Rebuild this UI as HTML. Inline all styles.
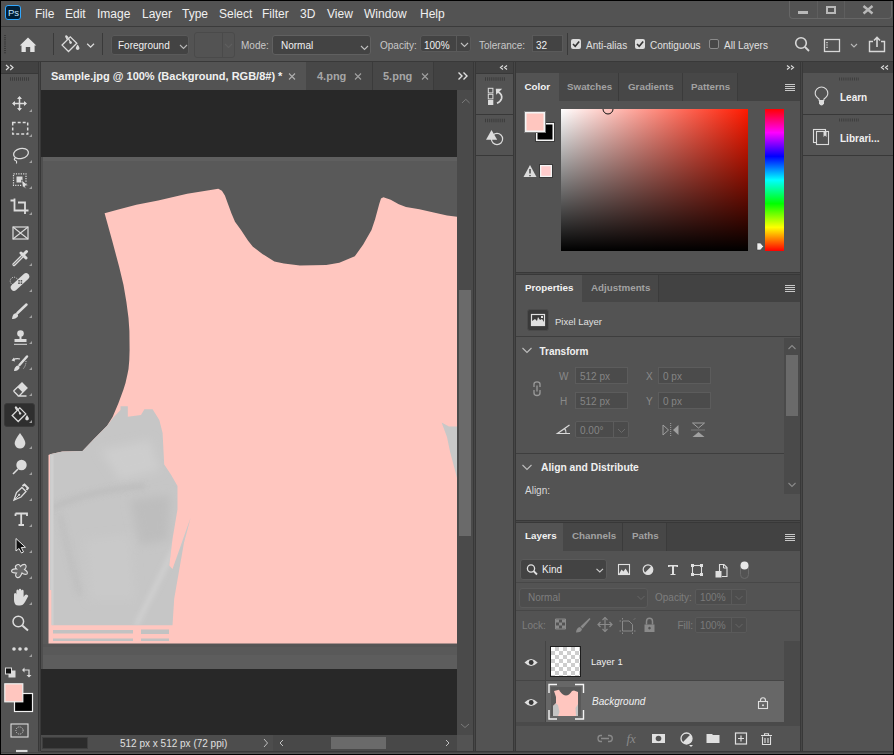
<!DOCTYPE html>
<html><head><meta charset="utf-8">
<style>
*{margin:0;padding:0;box-sizing:border-box}
html,body{width:894px;height:755px;overflow:hidden;background:#000}
body{position:relative;font-family:"Liberation Sans",sans-serif;color:#e8e8e8}
.a{position:absolute}
.t{position:absolute;white-space:nowrap;line-height:1}
.bg5{background:#535353}
.menu{font-size:12px;color:#f0f0f0;top:8px}
.tab{font-size:9.8px;font-weight:bold;color:#a2a2a2}
.tab.on{color:#f2f2f2}
svg{position:absolute;overflow:visible}
</style></head><body>
<!-- menu bar -->
<div class="a bg5" style="left:1px;top:1px;width:892px;height:25px"></div>
<div class="a" style="left:1px;top:26px;width:892px;height:1px;background:#3b3b3b"></div>
<!-- ps logo -->
<div class="a" style="left:5px;top:5px;width:16px;height:15px;border:1.5px solid #31a8ff;border-radius:3px;background:#001e36"></div>
<div class="t" style="left:8px;top:7.5px;font-size:9.5px;color:#c0e6ff;letter-spacing:0px;font-weight:normal">Ps</div>
<div class="t menu" style="left:35px">File</div>
<div class="t menu" style="left:65px">Edit</div>
<div class="t menu" style="left:97px">Image</div>
<div class="t menu" style="left:142px">Layer</div>
<div class="t menu" style="left:182px">Type</div>
<div class="t menu" style="left:219px">Select</div>
<div class="t menu" style="left:262px">Filter</div>
<div class="t menu" style="left:300px">3D</div>
<div class="t menu" style="left:327px">View</div>
<div class="t menu" style="left:364px">Window</div>
<div class="t menu" style="left:420px">Help</div>
<!-- window controls -->
<div class="a" style="left:789px;top:1px;width:103px;height:18px;border:1px solid #666;border-top:none;border-radius:0 0 4px 4px"></div>
<div class="a" style="left:817px;top:1px;width:1px;height:17px;background:#5e5e5e"></div>
<div class="a" style="left:844px;top:1px;width:1px;height:17px;background:#5e5e5e"></div>
<div class="a" style="left:798px;top:11px;width:10px;height:3px;background:#b8b8b8"></div>
<div class="a" style="left:826px;top:6px;width:10px;height:8px;border:2px solid #b8b8b8"></div>
<svg width="12" height="10" style="left:862px;top:4.5px"><path d="M1.5,1 L10.5,8.5 M10.5,1 L1.5,8.5" stroke="#b8b8b8" stroke-width="2.4"/></svg>
<!-- options bar -->
<div class="a bg5" style="left:1px;top:27px;width:892px;height:34px"></div>
<div class="a" style="left:1px;top:61px;width:892px;height:1px;background:#393939"></div>
<svg width="4" height="22" viewBox="4 34 4 22" style="left:4px;top:34px"><path d="M5,35 L5,54" stroke="#3a3a3a" stroke-width="2" stroke-dasharray="1 1.15"/></svg>
<svg width="20" height="20" style="left:18px;top:35px" viewBox="18 35 20 20"><path d="M28,37.5 L36.3,45.5 L34.6,45.5 L34.6,52 L30.2,52 L30.2,47 L25.8,47 L25.8,52 L21.5,52 L21.5,45.5 L19.8,45.5 Z" fill="#e2e2e2"/></svg>
<div class="a" style="left:53px;top:33px;width:1px;height:22px;background:#3a3a3a"></div>
<svg width="40" height="24" style="left:58px;top:32px" viewBox="58 32 40 24"><g fill="none" stroke="#dcdcdc" stroke-width="1.3"><path d="M62.1,45.1 L68.5,51.5 L76.8,43.2 L70.3,36.8 Z"/><path d="M70.5,42.3 L67.5,37 Q66,34.8 65.8,36.6 L67.3,39.5"/><path d="M87.2,43.8 L90.6,47.2 L94,43.8"/></g><circle cx="70.6" cy="42.6" r="1.3" fill="#dcdcdc"/><path d="M77.6,44.5 Q80,47.5 79.3,49 Q77.6,50.8 76,49 Q75.3,47.5 77.6,44.5 Z" fill="#dcdcdc"/></svg>
<div class="a" style="left:102px;top:33px;width:1px;height:22px;background:#3a3a3a"></div>
<div class="a" style="left:111px;top:35px;width:78px;height:20px;background:#434343;border:1px solid #5a5a5a;border-radius:3px"></div>
<div class="t" style="left:118px;top:41px;font-size:10px;color:#f0f0f0">Foreground</div>
<svg width="10" height="6" style="left:178.5px;top:44px"><path d="M1,1 L4.5,4.5 L8,1" fill="none" stroke="#b8b8b8" stroke-width="1.1"/></svg>
<div class="a" style="left:194px;top:32px;width:41px;height:26px;border:1px solid #4a4a4a;border-radius:3px"></div>
<div class="a" style="left:222px;top:33px;width:1px;height:24px;background:#4a4a4a"></div>
<svg width="10" height="6" style="left:224px;top:43px"><path d="M1,1 L4.5,4.5 L8,1" fill="none" stroke="#5e5e5e" stroke-width="1.2"/></svg>
<div class="t" style="left:241px;top:41px;font-size:10px;color:#c8c8c8">Mode:</div>
<div class="a" style="left:272px;top:35px;width:99px;height:20px;background:#434343;border:1px solid #606060;border-radius:3px"></div>
<div class="t" style="left:281px;top:41px;font-size:10px;color:#f0f0f0">Normal</div>
<svg width="10" height="6" style="left:360px;top:45px"><path d="M1,1 L4.5,4.5 L8,1" fill="none" stroke="#c0c0c0" stroke-width="1.1"/></svg>
<div class="t" style="left:380px;top:41px;font-size:10px;color:#c8c8c8">Opacity:</div>
<div class="a" style="left:420px;top:35px;width:51px;height:17px;background:#434343;border:1px solid #5a5a5a;border-radius:3px"></div>
<div class="a" style="left:456px;top:36px;width:1px;height:15px;background:#5a5a5a"></div>
<div class="t" style="left:424px;top:41px;font-size:10px;color:#f0f0f0">100%</div>
<svg width="10" height="6" style="left:459.5px;top:42px"><path d="M1,1 L4.5,4.5 L8,1" fill="none" stroke="#c0c0c0" stroke-width="1.1"/></svg>
<div class="t" style="left:479px;top:41px;font-size:10px;color:#c8c8c8">Tolerance:</div>
<div class="a" style="left:532px;top:35px;width:31px;height:17px;background:#434343;border:1px solid #5a5a5a"></div>
<div class="t" style="left:536px;top:41px;font-size:10px;color:#f0f0f0">32</div>
<div class="a" style="left:567px;top:33px;width:1px;height:22px;background:#3a3a3a"></div>
<div class="a" style="left:571px;top:39px;width:10px;height:10px;background:#dcdcdc;border-radius:2px"></div>
<svg width="10" height="10" style="left:571px;top:39px"><path d="M2,5 L4.2,7.3 L8.2,2.5" fill="none" stroke="#333" stroke-width="1.6"/></svg>
<div class="t" style="left:586px;top:41px;font-size:10px;color:#e0e0e0">Anti-alias</div>
<div class="a" style="left:635px;top:39px;width:10px;height:10px;background:#dcdcdc;border-radius:2px"></div>
<svg width="10" height="10" style="left:635px;top:39px"><path d="M2,5 L4.2,7.3 L8.2,2.5" fill="none" stroke="#333" stroke-width="1.6"/></svg>
<div class="t" style="left:650px;top:41px;font-size:10px;color:#e0e0e0">Contiguous</div>
<div class="a" style="left:709px;top:39px;width:10px;height:10px;border:1px solid #8a8a8a;border-radius:2px;background:#474747"></div>
<div class="t" style="left:724px;top:41px;font-size:10px;color:#e0e0e0">All Layers</div>
<svg width="20" height="20" style="left:792px;top:35px" viewBox="792 35 20 20"><circle cx="801" cy="43" r="5.3" fill="none" stroke="#d8d8d8" stroke-width="1.6"/><path d="M805,47 L809,51" stroke="#d8d8d8" stroke-width="1.8"/></svg>
<svg width="20" height="20" style="left:822px;top:35px" viewBox="822 35 20 20"><rect x="824.5" y="39.5" width="15" height="12" fill="none" stroke="#d8d8d8" stroke-width="1.3"/><path d="M827,42 L827,49" stroke="#d8d8d8" stroke-width="1.4" stroke-dasharray="1.2 1.2"/></svg>
<svg width="10" height="6" style="left:850px;top:43px"><path d="M1,1 L4,4 L7,1" fill="none" stroke="#b8b8b8" stroke-width="1.1"/></svg>
<svg width="20" height="20" style="left:867px;top:34px" viewBox="867 34 20 20"><path d="M873,41.5 L869.5,41.5 L869.5,51.5 L884.5,51.5 L884.5,41.5 L881,41.5" fill="none" stroke="#d8d8d8" stroke-width="1.4"/><path d="M877,47 L877,37.5 M874,40.5 L877,37.3 L880,40.5" fill="none" stroke="#d8d8d8" stroke-width="1.6"/></svg>
<!-- workspace bg -->
<div class="a" style="left:1px;top:62px;width:892px;height:691px;background:#464646"></div><div class="a" style="left:1px;top:753px;width:892px;height:1px;background:#575757"></div>
<svg width="894" height="755" viewBox="0 0 894 755" style="left:0;top:0"><g stroke="#383838" stroke-width="1" fill="none">
<path d="M38.5,62 V751 M40.5,62 V751 M473.5,62 V751 M475.5,62 V751 M513.5,62 V751 M515.5,62 V751 M800.5,62 V751 M802.5,62 V751"/>
<path d="M1,73.5 H38 M476,73.5 H513 M803,73.5 H893 M516,73.5 H800"/>
<path d="M516,272.5 H800 M516,274.5 H800 M516,520.5 H800 M516,522.5 H800 M476,114.5 H513 M476,155.5 H513 M803,114.5 H893 M803,155.5 H893"/>
<path d="M41,751.5 H893"/>
</g></svg>

<!-- toolbar column -->
<div class="a" style="left:1px;top:62px;width:37px;height:11px;background:#424242"></div>
<div class="a bg5" style="left:1px;top:74px;width:37px;height:678px"></div>
<div class="a" style="left:4px;top:403px;width:31px;height:24px;background:#2f2f2f;border:1px solid #3a3a3a;border-radius:3px"></div>
<svg width="40" height="693" viewBox="0 62 40 693" style="left:0;top:62px">
<g fill="#dcdcdc" stroke="none">
<!-- >> -->
<path d="M6,65 L8.8,67.5 L6,70 M10.2,65 L13,67.5 L10.2,70" fill="none" stroke="#dcdcdc" stroke-width="1.2"/>
<!-- gripper -->
<path d="M10,79 L30,79" stroke="#3c3c3c" stroke-width="3.6" stroke-dasharray="1 1"/>
<!-- triangles -->
<path d="M32,109 L32,112 L29,112 Z M32,134 L32,137 L29,137 Z M32,160 L32,163 L29,163 Z M32,186 L32,189 L29,189 Z M32,212 L32,215 L29,215 Z M32,263 L32,266 L29,266 Z M32,289 L32,292 L29,292 Z M32,315 L32,318 L29,318 Z M32,341 L32,344 L29,344 Z M32,367 L32,370 L29,370 Z M32,393 L32,396 L29,396 Z M32,420 L32,423 L29,423 Z M32,446 L32,449 L29,449 Z M32,472 L32,475 L29,475 Z M32,498 L32,501 L29,501 Z M32,524 L32,527 L29,527 Z M32,550 L32,553 L29,553 Z M32,576 L32,579 L29,579 Z M32,602 L32,605 L29,605 Z M32,654 L32,657 L29,657 Z" fill="#a0a0a0"/>
</g>
<g fill="none" stroke="#dcdcdc" stroke-width="1.5">
<!-- move -->
<path d="M19.5,97 L19.5,110 M13,103.5 L26,103.5"/>
<path d="M19.5,96 L17,99 L22,99 Z M19.5,111 L17,108 L22,108 Z M12,103.5 L15,101 L15,106 Z M27,103.5 L24,101 L24,106 Z" fill="#dcdcdc" stroke="none"/>
<!-- marquee -->
<rect x="12.7" y="122.5" width="15" height="11.5" stroke-dasharray="3 2"/>
<!-- lasso -->
<ellipse cx="21" cy="153.5" rx="7.5" ry="5" transform="rotate(-12 21 153.5)" stroke-width="1.3"/>
<path d="M15.5,157.5 Q13,160 15.8,160.5 Q17,161 16.5,163.5" stroke-width="1.2"/>
<!-- object selection -->
<rect x="13.5" y="173.8" width="12.5" height="11.5" stroke-dasharray="1.2 1.2" stroke-width="1.2"/>
<rect x="16.5" y="176.5" width="6" height="6" fill="#dcdcdc" stroke="none"/>
<path d="M21.5,180 L28.5,185.5 L25,186 L26.5,189 L22.5,186.5 Z" fill="#dcdcdc" stroke="#535353" stroke-width="0.8"/>
<!-- crop -->
<path d="M10.5,200.5 L14.5,200.5 M14.5,198.5 L14.5,210.5 L25,210.5 M18,202.5 L25,202.5 L25,214 M25,210.5 L28.5,210.5" stroke-width="1.8"/>
<!-- frame -->
<rect x="13" y="227" width="15" height="12" stroke-width="1.2"/>
<path d="M13,227 L28,239 M28,227 L13,239" stroke-width="1.1"/>
<!-- eyedropper -->
<path d="M14,264.5 L23,255.5" stroke-width="3.2" stroke-linecap="round"/>
<path d="M14,264.5 L23,255.5" stroke="#535353" stroke-width="1" stroke-linecap="round"/>
<path d="M21,253 L26,258 M23.5,254.5 L26.5,251.5" stroke-width="3" stroke-linecap="round"/>
<!-- healing -->
<path d="M14,287.5 L26,276.5" stroke-width="6.5" stroke-linecap="round"/>
<rect x="18.2" y="280" width="1.6" height="1.6" fill="#535353" stroke="none"/><rect x="20.6" y="280" width="1.6" height="1.6" fill="#535353" stroke="none"/><rect x="18.2" y="282.4" width="1.6" height="1.6" fill="#535353" stroke="none"/><rect x="20.6" y="282.4" width="1.6" height="1.6" fill="#535353" stroke="none"/>
<circle cx="14" cy="281" r="3.8" stroke-width="1" stroke-dasharray="1 1.2"/>
<!-- brush -->
<path d="M17.5,313 L26.5,304.5" stroke-width="2.5" stroke-linecap="round"/>
<path d="M12,319 Q12.5,313 16.5,313 Q19,315 17.5,317 Q15,319.5 12,319 Z" fill="#dcdcdc" stroke="none"/>
<!-- stamp -->
<circle cx="20.5" cy="333.5" r="3.3" fill="#dcdcdc" stroke="none"/>
<path d="M19.5,336 L21.5,336 L21.5,339 L26.5,339 L26.5,342 L14.5,342 L14.5,339 L19.5,339 Z" fill="#dcdcdc" stroke="none"/>
<path d="M14,344.3 L27,344.3" stroke-width="1"/>
<!-- history brush -->
<path d="M19.5,365 L27,356.5" stroke-width="2.5" stroke-linecap="round"/>
<path d="M14,371 Q14.5,366 18,365.5 Q20.5,367 19,369 Q17,371.5 14,371 Z" fill="#dcdcdc" stroke="none"/>
<path d="M20,359 Q16,358 13,360" stroke-width="1.2"/>
<path d="M11.5,360.5 L14,357.5 L15,361.5 Z" fill="#dcdcdc" stroke="none"/>
<path d="M26,361 Q26,366 23,369" stroke-width="1" stroke-dasharray="1 1.3"/>
<!-- eraser -->
<path d="M13.5,391 L22,383 L27,388 L19,396 L26.5,396 M13.5,391 L18.5,396 L19,396" stroke-width="1.3"/>
<path d="M22,383 L27,388 L22.5,392.3 L17.5,387.3 Z" fill="#dcdcdc" stroke="none"/>
<!-- bucket -->
<path d="M12.2,415.5 L18.2,421.5 L25.8,413.9 L19.8,407.9 Z" stroke-width="1.3"/>
<path d="M20,413.2 L17,408 Q15.6,406 15.4,407.6 L16.8,410.3" stroke-width="1.2"/>
<circle cx="20.1" cy="413.4" r="1.2" fill="#dcdcdc" stroke="none"/>
<path d="M27,415 Q29.3,418 28.7,419.5 Q27,421.2 25.4,419.5 Q24.7,418 27,415 Z" fill="#dcdcdc" stroke="none"/>
<!-- blur -->
<path d="M20,433 Q26,441 25.3,444 Q24,448.5 20,448.5 Q16,448.5 14.7,444 Q14,441 20,433 Z" fill="#dcdcdc" stroke="none"/>
<!-- dodge -->
<circle cx="21.5" cy="465" r="5.2" fill="#dcdcdc" stroke="none"/>
<path d="M18,469 L13,474" stroke-width="1.6"/>
<!-- pen -->
<path d="M14,500 L16.5,492.5 L22,487.5 L26,491.5 L21,497 Z" stroke-width="1.3"/>
<path d="M22.5,486 L24.5,484.5 L28,488 L26.5,490" stroke-width="2"/>
<path d="M14,500 L19,495" stroke-width="0.9"/>
<circle cx="19.2" cy="494.8" r="1" fill="#dcdcdc" stroke="none"/>
<!-- type -->
<path d="M15.5,513.5 L15.5,516 M15.5,513.5 L27,513.5 L27,516 M21.2,513.5 L21.2,525 M18.5,525 L24,525" stroke-width="1.8"/>
<!-- path select -->
<path d="M16,538.5 L16,551 L19,548.5 L21.5,553 L23.5,552 L21.3,547.5 L25.5,547.3 Z" fill="#111" stroke="#e6e6e6" stroke-width="1"/>
<!-- custom shape -->
<path d="M16,565.5 Q19,563 20.5,566.5 Q22.5,564 25,564.5 Q27.5,566.5 24.5,569.5 Q28.5,572 27,574 Q24.5,575 22,573 Q20,578.5 17,577.5 Q14.5,576 16.5,573 Q11.5,573 11.5,571 Q12,568.5 16.5,569 Q14.5,567 16,565.5 Z" fill="#686868" stroke="#dcdcdc" stroke-width="1.1"/>
<!-- hand -->
<path d="M14,597 L14,594.5 Q14,593 15.2,593 Q16.4,593 16.4,594.5 L16.4,591 Q16.4,589.5 17.6,589.5 Q18.8,589.5 18.8,591 L18.8,590 Q18.8,588.8 20,588.8 Q21.2,588.8 21.2,590 L21.2,591 Q21.2,589.8 22.4,589.8 Q23.6,589.8 23.6,591 L23.6,597 L25,595 Q26.3,593.8 27.5,595 L28.3,596 L25,602 Q23,605.5 20,605.5 L18.5,605.5 Q14,605.5 14,600 Z" fill="#dcdcdc" stroke="none"/>
<!-- zoom -->
<circle cx="18.3" cy="621.5" r="5.3" stroke-width="1.5"/>
<path d="M22.3,625.5 L28,630.5" stroke-width="2"/>
<!-- dots -->
<circle cx="14" cy="649" r="1.8" fill="#dcdcdc" stroke="none"/><circle cx="20" cy="649" r="1.8" fill="#dcdcdc" stroke="none"/><circle cx="26" cy="649" r="1.8" fill="#dcdcdc" stroke="none"/>
<!-- default colors -->
<rect x="9" y="671" width="6" height="6" fill="#dcdcdc" stroke="#dcdcdc" stroke-width="1"/>
<rect x="5.5" y="668" width="6" height="6" fill="#111" stroke="#dcdcdc" stroke-width="1"/>
<!-- swap -->
<path d="M23,670 L29,670 L29,676" stroke-width="1.2"/>
<path d="M22,670 L24.5,667.5 L24.5,672.5 Z M29,677.5 L26.5,675 L31.5,675 Z" fill="#dcdcdc" stroke="none"/>
<!-- quick mask -->
<rect x="11" y="724" width="17" height="13" stroke-width="1.1"/>
<circle cx="19.5" cy="730.5" r="3.6" stroke-width="1" stroke-dasharray="0.9 1.2"/>
<path d="M16,751 L27.5,751" stroke-width="2.2"/>
</g>
<rect x="14.5" y="693.5" width="18" height="18" fill="#000" stroke="#f0f0f0" stroke-width="1.2"/>
<rect x="4.8" y="683.8" width="18" height="18" fill="#ffc6bf" stroke="#f0f0f0" stroke-width="1.2"/>
</svg>

<!-- document column -->
<div class="a" style="left:41px;top:62px;width:432px;height:28px;background:#424242"></div>
<div class="a" style="left:41px;top:90px;width:416px;height:645px;background:#282828"></div>
<div class="a" style="left:457px;top:90px;width:16px;height:645px;background:#4a4a4a"></div>
<svg width="416" height="512" viewBox="41 157 416 512" style="left:41px;top:157px">
<defs>
<clipPath id="cg"><path d="M50,454.3 L62.4,451.5 L82.5,451 L93.7,439.2 L107.1,425.8 L113.3,417.4 L120.5,410 L120.5,406.2 L127.8,406.2 L127.8,416.8 L141,414.9 L144.4,409.3 L152.6,409.3 L159.3,419.9 L162.6,433 L164.2,464.6 L170.9,474.5 L177.5,486 L177.5,509.3 L172.5,539 L169.2,565.6 L172.5,569 L190.7,517.6 L184,542.4 L174.2,598.7 L172.5,625.2 L51.6,625.2 L51.6,590 L50,590 Z"/></clipPath>
<filter id="bl" x="-50%" y="-50%" width="200%" height="200%"><feGaussianBlur stdDeviation="5"/></filter>
<filter id="bl2" x="-50%" y="-50%" width="200%" height="200%"><feGaussianBlur stdDeviation="2.5"/></filter>
</defs>
<rect x="41" y="157" width="416" height="512" fill="#595959"/>
<rect x="41" y="157" width="416" height="4" fill="#5f5f5f"/>
<rect x="41" y="655" width="416" height="14" fill="#5d5d5d"/>
<rect x="41" y="644" width="416" height="3" fill="#555"/>
<path fill="#ffc6bf" d="M104.6,213.2 L117.4,209.8 L136.4,204.7 L158.2,200.4 L187.2,193.8 L209,190.2 L218.3,188.7 L221.9,190.7 L224.9,195.5 L227.9,203.8 L231.5,213.4 L235,221.7 L241,230 L248.1,240.8 L252.9,246.7 L262.4,253.9 L274.4,261.6 L283.9,263.4 L300,265.4 L326.2,264.9 L339.3,262.8 L354.8,256.3 L363.2,244.4 L371.5,230.1 L375.1,219.3 L379.3,203.8 L381,198.5 L383.4,197.3 L390.7,199.8 L398.8,204.3 L406,207 L419.4,209.2 L433.7,212.4 L447.1,215.5 L457,216.8 L457,643.5 L48.5,643.5 L48.5,455 L50,454.3 L62.4,451.5 L82.5,451 L93.7,439.2 L107.1,425.8 L112.7,416.8 L118.3,403.4 L123.3,390 L125.5,383 L127.5,374 L128.5,369 L129.3,360 L129.6,350 L129.4,331 L128.5,318 L126.4,302 L123.5,285 L119.2,267 L112,240 Z"/>
<g clip-path="url(#cg)">
<rect x="45" y="400" width="150" height="230" fill="#c6c6c6"/>
<path d="M100,450 L150,440 L160,470 L120,480 Z" fill="#cdcdcd" filter="url(#bl)"/>
<path d="M52,508 Q90,490 145,486" stroke="#bbbbbb" stroke-width="6" fill="none" filter="url(#bl2)" opacity=".7"/>
<path d="M60,515 Q70,560 80,595" stroke="#bdbdbd" stroke-width="6" fill="none" filter="url(#bl2)" opacity=".6"/>
<path d="M130,500 L170,495 L168,540 L140,545 Z" fill="#bdbdbd" filter="url(#bl)"/>
<path d="M85,540 L130,535 L135,600 L90,600 Z" fill="#c9c9c9" filter="url(#bl)"/>
<path d="M136,626 L186,525" stroke="#d2d2d2" stroke-width="4" fill="none" filter="url(#bl2)"/>
<path d="M52,455 L52,625" stroke="#cfcfcf" stroke-width="3" fill="none"/>
</g>
<path fill="#c2c2c2" d="M53,630 L133,630 L133,633.5 L53,633.5 Z M141,629.5 L169,629.5 L169,634 L141,634 Z M53,638.5 L133,638.5 L133,641 L53,641 Z M141,638.5 L169,638.5 L169,641 L141,641 Z"/>
<path fill="#c8c8c8" d="M441.6,422.5 L449,426.5 L457,426.5 L457,478 L450,451.6 L447,437 Z"/>
<rect x="41" y="157" width="2" height="512" fill="#4e4e4e"/>
</svg>
<div class="a" style="left:41px;top:735px;width:432px;height:16px;background:#4d4d4d"></div>
<div class="a bg5" style="left:41px;top:62px;width:265px;height:28px"></div>
<div class="a" style="left:306px;top:62px;width:67px;height:28px;background:#474747;border-right:1px solid #3b3b3b"></div>
<div class="a" style="left:373px;top:62px;width:61px;height:28px;background:#474747;border-right:1px solid #3b3b3b"></div>
<div class="t" style="left:51px;top:70.8px;font-size:11px;font-weight:bold;color:#f0f0f0">Sample.jpg @ 100% (Background, RGB/8#) *</div>
<div class="t" style="left:317px;top:70.8px;font-size:11px;font-weight:bold;color:#a6a6a6">4.png</div>
<div class="t" style="left:383px;top:70.8px;font-size:11px;font-weight:bold;color:#a6a6a6">5.png</div>
<svg width="480" height="30" viewBox="0 62 480 30" style="left:0;top:62px"><g fill="none" stroke-width="1.1">
<path d="M289,73.5 L295,79.5 M295,73.5 L289,79.5" stroke="#b0b0b0"/>
<path d="M355,73.5 L361,79.5 M361,73.5 L355,79.5" stroke="#a0a0a0"/>
<path d="M422,73.5 L428,79.5 M428,73.5 L422,79.5" stroke="#a0a0a0"/>
<path d="M458.5,72.5 L462,76 L458.5,79.5 M463.5,72.5 L467,76 L463.5,79.5" stroke="#e0e0e0" stroke-width="1.4"/>
</g></svg>
<!-- scrollbars -->
<div class="a" style="left:459px;top:290px;width:12px;height:246px;background:#6a6a6a"></div>
<svg width="20" height="650" viewBox="455 90 20 650" style="left:455px;top:90px"><path d="M462,103 L465.8,99.3 L469.6,103 M461,724 L465,727.5 L469,724" fill="none" stroke="#7a7a7a" stroke-width="1"/></svg>
<div class="a" style="left:42px;top:737px;width:46px;height:12px;background:#2b2b2b;border:1px solid #3e3e3e"></div>
<div class="t" style="left:120px;top:739px;font-size:10px;color:#e0e0e0">512 px x 512 px (72 ppi)</div>
<div class="a" style="left:273px;top:735px;width:184px;height:16px;background:#484848"></div>
<div class="a" style="left:331px;top:737px;width:55px;height:12px;background:#6a6a6a"></div>
<div class="a" style="left:457px;top:735px;width:16px;height:16px;background:#535353"></div>
<svg width="480" height="20" viewBox="0 735 480 20" style="left:0;top:735px"><path d="M264,739 L267.5,743 L264,747 M283,740 L280,743 L283,746 M446,740 L449,743 L446,746" fill="none" stroke="#c0c0c0" stroke-width="1"/></svg>

<!-- icons column -->
<div class="a" style="left:476px;top:62px;width:37px;height:11px;background:#424242"></div>
<div class="a bg5" style="left:476px;top:74px;width:37px;height:40px"></div>
<div class="a bg5" style="left:476px;top:115px;width:37px;height:40px"></div>
<div class="a bg5" style="left:476px;top:156px;width:37px;height:595px"></div>
<svg width="40" height="100" viewBox="474 60 40 100" style="left:474px;top:60px">
<path d="M503,65.5 L500.5,67.5 L503,69.5 M507,65.5 L504.5,67.5 L507,69.5" fill="none" stroke="#dcdcdc" stroke-width="1.2"/>
<path d="M485,79 L505,79 M485,120.5 L505,120.5" stroke="#3c3c3c" stroke-width="3.5" stroke-dasharray="1 1.1"/>
<rect x="488.3" y="88.3" width="4.6" height="4.6" fill="none" stroke="#dcdcdc" stroke-width="1"/>
<rect x="488.3" y="94.3" width="4.6" height="4.6" fill="none" stroke="#dcdcdc" stroke-width="1"/>
<rect x="488" y="100" width="5.3" height="5" fill="#dcdcdc"/>
<path d="M498.3,92 Q502.5,94.5 501.6,98.5 Q500.8,101.5 497,103.2" fill="none" stroke="#dcdcdc" stroke-width="1.7"/>
<path d="M495.8,88.8 L502.2,88.8 L496.2,94.8 Z" fill="#dcdcdc"/>
<path d="M486,139.8 L491.5,130.1 L497.2,139.8 Z" fill="#dcdcdc"/>
<circle cx="497" cy="139" r="5.6" fill="none" stroke="#dcdcdc" stroke-width="1.2"/>
</svg>

<!-- panel column -->
<div class="a" style="left:516px;top:62px;width:284px;height:11px;background:#424242"></div>
<div class="a bg5" style="left:516px;top:74px;width:284px;height:198px"></div>
<div class="a" style="left:516px;top:73px;width:284px;height:28px;background:#424242"></div>
<div class="a bg5" style="left:516px;top:73px;width:43px;height:28px"></div>
<div class="a" style="left:559px;top:73px;width:60px;height:28px;background:#474747;border-right:1px solid #3b3b3b"></div>
<div class="a" style="left:619px;top:73px;width:64px;height:28px;background:#474747;border-right:1px solid #3b3b3b"></div>
<div class="a" style="left:683px;top:73px;width:55px;height:28px;background:#474747;border-right:1px solid #3b3b3b"></div>
<div class="t tab on" style="left:524.5px;top:82px">Color</div>
<div class="t tab" style="left:567px;top:82px">Swatches</div>
<div class="t tab" style="left:628px;top:82px">Gradients</div>
<div class="t tab" style="left:691px;top:82px">Patterns</div>
<svg width="12" height="10" style="left:784px;top:83px"><path d="M1,1.5 L11,1.5 M1,3.5 L11,3.5 M1,5.5 L11,5.5 M1,7.5 L11,7.5" stroke="#c8c8c8" stroke-width="1"/></svg>
<div class="a" style="left:524px;top:111px;width:22px;height:22px;background:#ffc6bf;border:1px solid #7a7a7a;box-shadow:inset 0 0 0 1.5px #f4f4f4"></div>
<div class="a" style="left:535px;top:122px;width:20px;height:20px;background:#000;border:1px solid #3a3a3a;box-shadow:inset 0 0 0 1.5px #f4f4f4"></div>
<div class="a" style="left:524px;top:111px;width:22px;height:22px;background:#ffc6bf;border:1px solid #7a7a7a;box-shadow:inset 0 0 0 1.5px #f4f4f4"></div>
<svg width="14" height="14" style="left:523px;top:164px" viewBox="523 164 14 14"><path d="M530,165 L536.5,177 L523.5,177 Z" fill="#dcdcdc"/><path d="M530,169 L530,173.5 M530,175 L530,176.2" stroke="#535353" stroke-width="1.6"/></svg>
<div class="a" style="left:539px;top:164px;width:14px;height:14px;background:#ffcccc;border:1px solid #3a3a3a;box-shadow:inset 0 0 0 1.3px #f4f4f4"></div>
<div class="a" style="left:561px;top:109px;width:187px;height:142px;background:linear-gradient(to top,#000,rgba(0,0,0,0)),linear-gradient(to right,#fff,#ff1a00)"></div>
<div class="a" style="left:765px;top:109px;width:19px;height:142px;background:linear-gradient(to bottom,#ff0000 0%,#ff00ff 16.67%,#0000ff 33.33%,#00ffff 50%,#00ff00 66.67%,#ffff00 83.33%,#ff0000 100%)"></div>
<svg width="187" height="142" viewBox="561 109 187 142" style="left:561px;top:109px;overflow:hidden"><circle cx="608" cy="109" r="5" fill="none" stroke="#111" stroke-width="1"/></svg><svg width="200" height="160" viewBox="560 100 200 160" style="left:560px;top:100px"><path d="M757,243 L760.5,243 L763.5,246.5 L760.5,250 L757,250 Z" fill="#f0f0f0" stroke="#444" stroke-width="0.6"/></svg>
<div class="a" style="left:516px;top:101px;width:45px;height:0"></div>
<div class="a bg5" style="left:516px;top:275px;width:284px;height:245px"></div>
<div class="a" style="left:516px;top:275px;width:284px;height:27px;background:#424242"></div>
<div class="a bg5" style="left:516px;top:275px;width:66px;height:27px"></div>
<div class="a" style="left:582px;top:275px;width:77px;height:27px;background:#474747;border-right:1px solid #3b3b3b"></div>
<div class="t tab on" style="left:525px;top:282.5px">Properties</div>
<div class="t tab" style="left:591px;top:282.5px">Adjustments</div>
<svg width="12" height="10" style="left:784px;top:284px"><path d="M1,1.5 L11,1.5 M1,3.5 L11,3.5 M1,5.5 L11,5.5 M1,7.5 L11,7.5" stroke="#c8c8c8" stroke-width="1"/></svg>
<div class="a" style="left:527px;top:309px;width:22px;height:22px;background:#393939;border-radius:3px;border:1px solid #4a4a4a"></div>
<svg width="22" height="22" viewBox="527 309 22 22" style="left:527px;top:309px"><rect x="531.5" y="314.5" width="13" height="11" fill="none" stroke="#e0e0e0" stroke-width="1.2"/><path d="M532,325 L532,321 L535,319 L537,321 L538,317 L540,320 L542,319 L544,322 L544,325 Z" fill="#e0e0e0"/><rect x="541" y="316" width="2" height="2" fill="#e0e0e0"/></svg>
<div class="t" style="left:555px;top:317px;font-size:9.5px;color:#e0e0e0">Pixel Layer</div>
<div class="a" style="left:516px;top:336px;width:284px;height:1px;background:#3e3e3e"></div>
<div class="a" style="left:784px;top:338px;width:16px;height:156px;background:#4a4a4a"></div>
<div class="a" style="left:786px;top:355px;width:12px;height:61px;background:#6a6a6a"></div>
<svg width="300" height="200" viewBox="516 336 300 200" style="left:516px;top:336px"><g fill="none" stroke="#bdbdbd" stroke-width="1.1">
<path d="M522.5,348 L527,352.5 L531.5,348"/>
<path d="M522.5,465 L527,469.5 L531.5,465"/>
<path d="M788.5,349 L792,345.5 L795.5,349 M788.5,483 L792,486.5 L795.5,483" stroke="#8a8a8a"/>
<path d="M534,387 L534,384 Q534,381.8 537,381.8 Q540,381.8 540,384 L540,387 M534,390 L534,393 Q534,395.5 537,395.5 Q540,395.5 540,393 L540,390 M537,385.5 L537,391.5" stroke="#9a9a9a" stroke-width="1.3"/>
<path d="M569.5,425 L557.5,433.5 L570,433.5 M564.5,428.5 Q566.5,430.5 566,433.5" stroke="#d8d8d8" stroke-width="1.2"/>
<path d="M663,425 L668.5,430 L663,435 Z" stroke="#a0a0a0" stroke-width="1"/>
<path d="M678.5,425 L673,430 L678.5,435 Z" fill="#a0a0a0" stroke="none"/>
<path d="M670.7,423 L670.7,437" stroke="#a0a0a0" stroke-width="1" stroke-dasharray="1 1"/>
<path d="M692.5,423 L704.5,423 L698.5,428 Z" stroke="#a0a0a0" stroke-width="1"/>
<path d="M692.5,437 L704.5,437 L698.5,432 Z" fill="#a0a0a0" stroke="none"/>
<path d="M691.5,430 L705.5,430" stroke="#a0a0a0" stroke-width="1" stroke-dasharray="1 1"/>
</g></svg>
<div class="t" style="left:539.5px;top:346.5px;font-size:10px;font-weight:bold;color:#f0f0f0">Transform</div>
<div class="t" style="left:559px;top:371.5px;font-size:10px;color:#8a8a8a">W</div>
<div class="t" style="left:560px;top:396.5px;font-size:10px;color:#8a8a8a">H</div>
<div class="t" style="left:646px;top:371.5px;font-size:10px;color:#8a8a8a">X</div>
<div class="t" style="left:646px;top:396.5px;font-size:10px;color:#8a8a8a">Y</div>
<div class="a" style="left:575px;top:367px;width:53px;height:17px;background:#4b4b4b;border:1px solid #5c5c5c"></div>
<div class="a" style="left:575px;top:392px;width:53px;height:17px;background:#4b4b4b;border:1px solid #5c5c5c"></div>
<div class="a" style="left:658px;top:367px;width:53px;height:17px;background:#4b4b4b;border:1px solid #5c5c5c"></div>
<div class="a" style="left:658px;top:392px;width:53px;height:17px;background:#4b4b4b;border:1px solid #5c5c5c"></div>
<div class="a" style="left:575px;top:421px;width:54px;height:17px;background:#4b4b4b;border:1px solid #5c5c5c;border-radius:2px"></div>
<div class="a" style="left:613px;top:422px;width:1px;height:15px;background:#5c5c5c"></div>
<svg width="10" height="6" style="left:617px;top:428px"><path d="M1,1 L4.5,4.5 L8,1" fill="none" stroke="#6a6a6a" stroke-width="1"/></svg>
<div class="t" style="left:580px;top:371.5px;font-size:10px;color:#858585">512 px</div>
<div class="t" style="left:580px;top:396.5px;font-size:10px;color:#858585">512 px</div>
<div class="t" style="left:663px;top:371.5px;font-size:10px;color:#858585">0 px</div>
<div class="t" style="left:663px;top:396.5px;font-size:10px;color:#858585">0 px</div>
<div class="t" style="left:580px;top:425.5px;font-size:10px;color:#858585">0.00°</div>
<div class="a" style="left:516px;top:453px;width:268px;height:1px;background:#3e3e3e"></div>
<div class="t" style="left:541px;top:463px;font-size:10.3px;font-weight:bold;color:#f0f0f0">Align and Distribute</div>
<div class="t" style="left:525px;top:485.5px;font-size:10px;color:#d8d8d8">Align:</div>
<div class="a bg5" style="left:516px;top:523px;width:284px;height:228px"></div>
<div class="a" style="left:516px;top:523px;width:284px;height:28px;background:#424242"></div>
<div class="a bg5" style="left:516px;top:523px;width:47px;height:28px"></div>
<div class="a" style="left:563px;top:523px;width:60px;height:28px;background:#474747;border-right:1px solid #3b3b3b"></div>
<div class="a" style="left:623px;top:523px;width:44px;height:28px;background:#474747;border-right:1px solid #3b3b3b"></div>
<div class="t tab on" style="left:525px;top:531px">Layers</div>
<div class="t tab" style="left:572px;top:531px">Channels</div>
<div class="t tab" style="left:632px;top:531px">Paths</div>
<svg width="12" height="10" style="left:784px;top:533px"><path d="M1,1.5 L11,1.5 M1,3.5 L11,3.5 M1,5.5 L11,5.5 M1,7.5 L11,7.5" stroke="#c8c8c8" stroke-width="1"/></svg>
<div class="a" style="left:520px;top:559px;width:87px;height:21px;background:#434343;border:1px solid #5a5a5a;border-radius:3px"></div>
<div class="t" style="left:542px;top:564.5px;font-size:10px;color:#f0f0f0">Kind</div>
<div class="a" style="left:516px;top:582px;width:284px;height:1px;background:#474747"></div>
<div class="a" style="left:519px;top:588px;width:129px;height:20px;background:#4d4d4d;border:1px solid #5a5a5a;border-radius:3px"></div>
<div class="t" style="left:528px;top:593px;font-size:10px;color:#7e7e7e">Normal</div>
<div class="t" style="left:655px;top:593px;font-size:10px;color:#7e7e7e">Opacity:</div>
<div class="a" style="left:695px;top:589px;width:52px;height:16px;background:#4d4d4d;border:1px solid #5a5a5a;border-radius:2px"></div>
<div class="a" style="left:731px;top:590px;width:1px;height:14px;background:#5a5a5a"></div>
<div class="t" style="left:700px;top:593px;font-size:10px;color:#7a7a7a">100%</div>
<div class="a" style="left:516px;top:610px;width:284px;height:1px;background:#474747"></div>
<div class="t" style="left:522px;top:620.5px;font-size:10px;color:#7e7e7e">Lock:</div>
<div class="t" style="left:677.5px;top:620.5px;font-size:10px;color:#7e7e7e">Fill:</div>
<div class="a" style="left:695px;top:617px;width:52px;height:16px;background:#4d4d4d;border:1px solid #5a5a5a;border-radius:2px"></div>
<div class="a" style="left:731px;top:618px;width:1px;height:14px;background:#5a5a5a"></div>
<div class="t" style="left:700px;top:621px;font-size:10px;color:#7a7a7a">100%</div>
<svg width="284" height="120" viewBox="516 550 284 120" style="left:516px;top:550px">
<g fill="none" stroke="#e0e0e0" stroke-width="1.3">
<circle cx="531" cy="568.5" r="3.6"/><path d="M533.5,571 L537,574.5" stroke-width="1.8"/>
<path d="M596.5,568.8 L599.8,572 L603,568.8" stroke="#cfcfcf" stroke-width="1.1"/>
<rect x="618.5" y="564.5" width="11" height="10" stroke-width="1.1"/>
<circle cx="648" cy="569.6" r="4.8" stroke-width="1.2"/>
<rect x="692.5" y="565.5" width="9" height="9" stroke-width="1.1"/>
<path d="M719.5,571 L719.5,564.5 L724,564.5 L727,567.5 L727,576.5 L722,576.5" stroke-width="1.1"/><path d="M723.5,564.5 L723.5,568 L727,568" stroke-width="1"/>
<rect x="740.5" y="563.5" width="8" height="15" rx="4" stroke="#6a6a6a" stroke-width="1"/>
</g>
<path d="M644.6,573 L651.4,566.2 A4.8,4.8 0 0 1 644.6,573 Z" fill="#e0e0e0"/>
<path d="M668,565 L678,565 L678,567 L676.5,567 L676.5,566.5 L674,566.5 L674,574 L675.5,574 L675.5,575 L670.5,575 L670.5,574 L672,574 L672,566.5 L669.5,566.5 L669.5,567 L668,567 Z" fill="#e0e0e0"/>
<path d="M619,574 L621.5,569.5 L623.5,571.5 L625.5,568.5 L629,574 Z" fill="#e0e0e0"/>
<g fill="#e0e0e0"><rect x="691" y="564" width="3" height="3"/><rect x="700" y="564" width="3" height="3"/><rect x="691" y="573" width="3" height="3"/><rect x="700" y="573" width="3" height="3"/></g>
<rect x="715.5" y="571" width="6" height="6.5" fill="#e0e0e0"/>
<circle cx="744.5" cy="565.5" r="4" fill="#e8e8e8"/>
<path d="M603,583 L603,583" />
<g fill="#8a8a8a" stroke="none" transform="translate(0,-1.5)">
<path d="M555.5,620.5 h10 v10 h-10 Z" fill="none" stroke="#8a8a8a" stroke-width="1"/>
<rect x="556" y="621" width="3" height="3"/><rect x="562" y="621" width="3" height="3"/><rect x="559" y="624" width="3" height="3"/><rect x="556" y="627" width="3" height="3"/><rect x="562" y="627" width="3" height="3"/>
<path d="M576,634 Q576.5,629 580,628.5 L582,630.5 Q581.5,634 576,634 Z"/>
<path d="M580.5,628 L589.5,619.5 L590.5,620.5 L582.5,630 Z"/>
<path d="M644.5,626 h10 v7.5 h-10 Z M649.5,628.3 a1.3,1.3 0 1 0 0.01,0 Z" fill-rule="evenodd"/>
</g>
<g fill="none" stroke="#8a8a8a" stroke-width="1.2">
<g transform="translate(0,-1.5)"><path d="M605,619 L605,633 M598,626 L612,626"/>
<path d="M602.5,621.5 L605,619 L607.5,621.5 M602.5,630.5 L605,633 L607.5,630.5 M600.5,623.5 L598,626 L600.5,628.5 M609.5,623.5 L612,626 L609.5,628.5"/></g>
<path d="M622.5,621 L629,621 L632.5,624.5 L632.5,631 L622.5,631 Z M622.5,618 L622.5,619.5 M619.5,621 L621,621 M634,619.5 L635,618.5 M622.5,632.5 L622.5,634 M619.5,631 L621,631 M632.5,632.5 L632.5,634 M634,631 L635.5,631" stroke-width="1"/>
<path d="M646.5,624.5 L646.5,621.5 Q646.5,618.3 649.5,618.3 Q652.5,618.3 652.5,621.5 L652.5,624.5" stroke-width="1.5"/>
<path d="M735.5,596 L739,599.5 L742.5,596 M735.5,624 L739,627.5 L742.5,624" stroke="#666" stroke-width="1"/>
<path d="M637.5,596 L641,599.5 L644.5,596" stroke="#666" stroke-width="1"/>
</g>
</svg>
<!-- layer rows -->
<div class="a" style="left:516px;top:641px;width:268px;height:40px;background:#535353"></div>
<div class="a" style="left:784px;top:641px;width:16px;height:85px;background:#4a4a4a"></div>
<div class="a" style="left:546px;top:681px;width:238px;height:41px;background:#676767"></div>
<div class="a" style="left:516px;top:680px;width:268px;height:1px;background:#454545"></div>
<div class="a" style="left:545px;top:641px;width:1px;height:81px;background:#454545"></div>
<div class="a" style="left:516px;top:722px;width:284px;height:4px;background:#4a4a4a"></div>
<div class="a" style="left:550px;top:645.5px;width:31px;height:31px;border:1px solid #1e1e1e;background-color:#fff;background-image:linear-gradient(45deg,#cdcdcd 25%,transparent 25%,transparent 75%,#cdcdcd 75%),linear-gradient(45deg,#cdcdcd 25%,transparent 25%,transparent 75%,#cdcdcd 75%);background-size:8px 8px;background-position:0 0,4px 4px"></div>
<div class="t" style="left:591px;top:657px;font-size:9.5px;color:#f0f0f0">Layer 1</div>
<div class="t" style="left:592px;top:697px;font-size:10px;font-style:italic;color:#f0f0f0">Background</div>
<svg width="284" height="90" viewBox="516 640 284 90" style="left:516px;top:640px">
<g fill="#e0e0e0"><path d="M524.5,662.5 Q531,655.5 537.7,662.5 Q531,669.5 524.5,662.5 Z"/><path d="M524.5,702.5 Q531,695.5 537.7,702.5 Q531,709.5 524.5,702.5 Z"/></g>
<circle cx="531.2" cy="662.5" r="2.4" fill="#353535"/><circle cx="531.2" cy="702.5" r="2.4" fill="#353535"/>
<rect x="551" y="687" width="30" height="29" fill="#595959"/>
<path fill="#ffc6bf" d="M554,691 L559,689.8 L560,691.5 Q563,695.5 566,695.5 Q569,695.5 572,691 L574,690.5 L578,692 L578,716 L553,716 L553,706 L556,703 L556,697 Z"/>
<path fill="#c4c4c4" d="M553,706 L556,703.5 L558,705 L559.5,712 L558,716 L553,716 Z M578,704 L575.5,708 L576,716 L578,716 Z"/>
<g fill="none" stroke="#f4f4f4" stroke-width="1.4"><path d="M549,693 L549,684.5 L557,684.5 M575,684.5 L583.5,684.5 L583.5,693 M583.5,710 L583.5,719 L575,719 M557,719 L549,719 L549,710"/></g>
<path d="M760.5,701.5 L760.5,700.5 Q760.5,697.8 763,697.8 Q765.5,697.8 765.5,700.5 L765.5,701.5" fill="none" stroke="#e0e0e0" stroke-width="1.1"/>
<rect x="758.5" y="701.5" width="9" height="7" fill="none" stroke="#e0e0e0" stroke-width="1.1"/>
<circle cx="763" cy="705.2" r="1" fill="#e0e0e0"/>
</svg>
<!-- bottom icons -->
<svg width="200" height="25" viewBox="590 726 200 25" style="left:590px;top:726px">
<g fill="none" stroke="#8a8a8a" stroke-width="1.3"><path d="M602,735.5 L600.5,735.5 Q598,735.5 598,738.5 Q598,741.5 600.5,741.5 L602,741.5 M608,735.5 L609.5,735.5 Q612.3,735.5 612.3,738.5 Q612.3,741.5 609.5,741.5 L608,741.5 M601,738.5 L609,738.5"/></g>
<text x="626.5" y="743" font-family="Liberation Serif" font-style="italic" font-size="13" fill="#8a8a8a">fx</text>
<rect x="652" y="734" width="13" height="9" fill="#e0e0e0"/><circle cx="658.5" cy="738.5" r="2.8" fill="#535353"/>
<circle cx="686.5" cy="738.5" r="5.5" fill="none" stroke="#e0e0e0" stroke-width="1.3"/><path d="M682.6,742.4 L690.4,734.6 A5.5,5.5 0 0 1 682.6,742.4 Z" fill="#e0e0e0"/>
<path d="M689,745 L693,745 L691,747 Z" fill="#e0e0e0"/>
<path d="M706.5,734 L712,734 L713,735 L719.5,735 L719.5,743 L706.5,743 Z" fill="#e0e0e0"/>
<rect x="735.5" y="733" width="11" height="11" fill="none" stroke="#e0e0e0" stroke-width="1.2"/><path d="M741,735.5 L741,741.5 M738,738.5 L744,738.5" stroke="#e0e0e0" stroke-width="1.2"/>
<path d="M761,735.5 L772,735.5 M764.5,735.5 L764.5,733.8 L768.5,733.8 L768.5,735.5 M762.5,736.5 L762.5,744.5 L770.5,744.5 L770.5,736.5 M765,738 L765,743 M768,738 L768,743" fill="none" stroke="#e0e0e0" stroke-width="1.1"/>
</svg>

<!-- right column -->
<div class="a" style="left:803px;top:62px;width:90px;height:11px;background:#424242"></div>
<div class="a bg5" style="left:803px;top:73px;width:90px;height:41px"></div>
<div class="a bg5" style="left:803px;top:115px;width:90px;height:40px"></div>
<div class="a bg5" style="left:803px;top:156px;width:90px;height:595px"></div>
<svg width="894" height="20" viewBox="0 60 894 20" style="left:0;top:60px"><path d="M787,65.5 L789.5,67.5 L787,69.5 M791,65.5 L793.5,67.5 L791,69.5 M884,65.5 L881.5,67.5 L884,69.5 M888,65.5 L885.5,67.5 L888,69.5" fill="none" stroke="#dcdcdc" stroke-width="1.2"/>
</svg>
<svg width="90" height="100" viewBox="803 60 90 100" style="left:803px;top:60px">
<path d="M839,79 L859,79 M839,120 L859,120" stroke="#3e3e3e" stroke-width="3" stroke-dasharray="1 1.15"/>
<path d="M819.2,100.5 L819,99 Q815.2,96.5 815.2,93.3 A6.3,6.3 0 0 1 827.8,93.3 Q827.8,96.5 824,99 L823.8,100.5 Z" fill="none" stroke="#dcdcdc" stroke-width="1.1"/>
<path d="M819,101 L824,101 L824,103.5 Q823,105.5 821.5,105.5 Q820,105.5 819,103.5 Z" fill="#dcdcdc"/>
<rect x="813.5" y="129.5" width="12" height="13" fill="none" stroke="#dcdcdc" stroke-width="1.1"/>
<rect x="816.5" y="131.5" width="12" height="13" fill="#535353" stroke="#dcdcdc" stroke-width="1.1"/>
<path d="M823.5,131.5 L826.5,131.5 L826.5,137 L825,135.5 L823.5,137 Z" fill="#dcdcdc"/>
</svg>
<div class="t" style="left:840px;top:93px;font-size:10px;font-weight:bold;color:#f0f0f0">Learn</div>
<div class="t" style="left:840px;top:133.5px;font-size:10px;font-weight:bold;color:#f0f0f0">Librari...</div>

</body></html>
